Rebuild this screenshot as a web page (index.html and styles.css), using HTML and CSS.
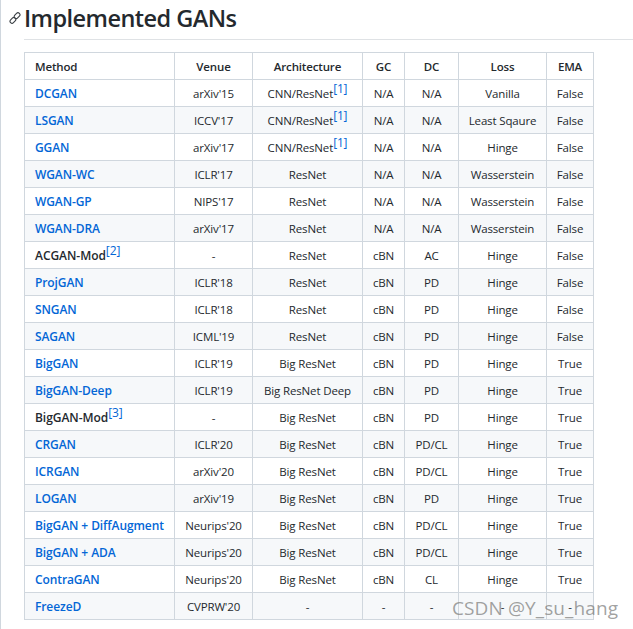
FILE: index.html
```html
<!DOCTYPE html>
<html lang="en">
<head>
<meta charset="utf-8">
<title>Implemented GANs</title>
<link rel="stylesheet" href="styles.css">
</head>
<body>
<main class="page">
  <h2 class="title">
    <a class="anchor" href="#" aria-label="Permalink">
      <svg viewBox="0 0 12 12" width="12" height="12" aria-hidden="true"><g fill="none" stroke="#3a3f44" stroke-width="1.1"><rect x="4.9" y="1.6" width="6.4" height="4" rx="2" transform="rotate(-45 8.1 3.6)"/><rect x="0.7" y="6.4" width="6.4" height="4" rx="2" transform="rotate(-45 3.9 8.4)"/></g></svg>
    </a>
    Implemented GANs
  </h2>
  <table class="gans">
    <colgroup>
      <col class="c-method"><col class="c-venue"><col class="c-arch"><col class="c-gc"><col class="c-dc"><col class="c-loss"><col class="c-ema">
    </colgroup>
    <thead>
      <tr><th class="left">Method</th><th>Venue</th><th>Architecture</th><th>GC</th><th>DC</th><th>Loss</th><th>EMA</th></tr>
    </thead>
    <tbody>
      <tr><td class="left"><a href="#">DCGAN</a></td><td>arXiv'15</td><td>CNN/ResNet<sup><a href="#">[1]</a></sup></td><td>N/A</td><td>N/A</td><td>Vanilla</td><td>False</td></tr>
      <tr><td class="left"><a href="#">LSGAN</a></td><td>ICCV'17</td><td>CNN/ResNet<sup><a href="#">[1]</a></sup></td><td>N/A</td><td>N/A</td><td>Least Sqaure</td><td>False</td></tr>
      <tr><td class="left"><a href="#">GGAN</a></td><td>arXiv'17</td><td>CNN/ResNet<sup><a href="#">[1]</a></sup></td><td>N/A</td><td>N/A</td><td>Hinge</td><td>False</td></tr>
      <tr><td class="left"><a href="#">WGAN-WC</a></td><td>ICLR'17</td><td>ResNet</td><td>N/A</td><td>N/A</td><td>Wasserstein</td><td>False</td></tr>
      <tr><td class="left"><a href="#">WGAN-GP</a></td><td>NIPS'17</td><td>ResNet</td><td>N/A</td><td>N/A</td><td>Wasserstein</td><td>False</td></tr>
      <tr><td class="left"><a href="#">WGAN-DRA</a></td><td>arXiv'17</td><td>ResNet</td><td>N/A</td><td>N/A</td><td>Wasserstein</td><td>False</td></tr>
      <tr><td class="left plain">ACGAN-Mod<sup><a href="#">[2]</a></sup></td><td>-</td><td>ResNet</td><td>cBN</td><td>AC</td><td>Hinge</td><td>False</td></tr>
      <tr><td class="left"><a href="#">ProjGAN</a></td><td>ICLR'18</td><td>ResNet</td><td>cBN</td><td>PD</td><td>Hinge</td><td>False</td></tr>
      <tr><td class="left"><a href="#">SNGAN</a></td><td>ICLR'18</td><td>ResNet</td><td>cBN</td><td>PD</td><td>Hinge</td><td>False</td></tr>
      <tr><td class="left"><a href="#">SAGAN</a></td><td>ICML'19</td><td>ResNet</td><td>cBN</td><td>PD</td><td>Hinge</td><td>False</td></tr>
      <tr><td class="left"><a href="#">BigGAN</a></td><td>ICLR'19</td><td>Big ResNet</td><td>cBN</td><td>PD</td><td>Hinge</td><td>True</td></tr>
      <tr><td class="left"><a href="#">BigGAN-Deep</a></td><td>ICLR'19</td><td>Big ResNet Deep</td><td>cBN</td><td>PD</td><td>Hinge</td><td>True</td></tr>
      <tr><td class="left plain">BigGAN-Mod<sup><a href="#">[3]</a></sup></td><td>-</td><td>Big ResNet</td><td>cBN</td><td>PD</td><td>Hinge</td><td>True</td></tr>
      <tr><td class="left"><a href="#">CRGAN</a></td><td>ICLR'20</td><td>Big ResNet</td><td>cBN</td><td>PD/CL</td><td>Hinge</td><td>True</td></tr>
      <tr><td class="left"><a href="#">ICRGAN</a></td><td>arXiv'20</td><td>Big ResNet</td><td>cBN</td><td>PD/CL</td><td>Hinge</td><td>True</td></tr>
      <tr><td class="left"><a href="#">LOGAN</a></td><td>arXiv'19</td><td>Big ResNet</td><td>cBN</td><td>PD</td><td>Hinge</td><td>True</td></tr>
      <tr><td class="left"><a href="#">BigGAN + DiffAugment</a></td><td>Neurips'20</td><td>Big ResNet</td><td>cBN</td><td>PD/CL</td><td>Hinge</td><td>True</td></tr>
      <tr><td class="left"><a href="#">BigGAN + ADA</a></td><td>Neurips'20</td><td>Big ResNet</td><td>cBN</td><td>PD/CL</td><td>Hinge</td><td>True</td></tr>
      <tr><td class="left"><a href="#">ContraGAN</a></td><td>Neurips'20</td><td>Big ResNet</td><td>cBN</td><td>CL</td><td>Hinge</td><td>True</td></tr>
      <tr><td class="left"><a href="#">FreezeD</a></td><td>CVPRW'20</td><td>-</td><td>-</td><td>-</td><td>-</td><td>-</td></tr>
    </tbody>
  </table>
  <div class="watermark">CSDN @Y_su_hang</div>
</main>
</body>
</html>
```
FILE: styles.css
```css
html, body {
  margin: 0;
  padding: 0;
  background: #fff;
}
body {
  height: 629px;
  overflow: hidden;
  font-family: "Open Sans", "Noto Sans", sans-serif;
  color: #24292e;
}
.page {
  position: relative;
  height: 629px;
  box-sizing: border-box;
  padding-left: 24px;
  overflow: hidden;
}
.page::before {
  content: "";
  position: absolute;
  left: 0;
  top: 0;
  bottom: 0;
  width: 1px;
  background: #d0d7de;
}
.title {
  position: relative;
  margin: 0 0 12px;
  height: 39px;
  border-bottom: 1px solid #dfe2e5;
  font-size: 23.5px;
  font-weight: 600;
  line-height: 37px;
  letter-spacing: -0.55px;
  white-space: nowrap;
}
.anchor {
  position: absolute;
  left: -15px;
  top: 12px;
  display: block;
  line-height: 0;
}
.gans {
  table-layout: fixed;
  width: 570px;
  border-collapse: collapse;
  font-size: 11.5px;
  letter-spacing: -0.15px;
}
.c-method { width: 150px; }
.c-venue { width: 78px; }
.c-arch { width: 110px; }
.c-gc { width: 42px; }
.c-dc { width: 54px; }
.c-loss { width: 88px; }
.c-ema { width: 47px; }
.gans tr {
  height: 27px;
}
.gans tbody tr:nth-child(even) {
  background: #f6f8fa;
}
.gans th, .gans td {
  border: 1px solid #d0d7de;
  padding: 2px 2px 0;
  text-align: center;
  line-height: 16px;
  white-space: nowrap;
}
.gans th {
  font-weight: 600;
}
.gans .left {
  text-align: left;
  padding-left: 10px;
}
.gans a {
  color: #0366d6;
  text-decoration: none;
}
.gans td.left > a {
  font-size: 12px;
  font-weight: 600;
  letter-spacing: -0.1px;
}
.gans td.plain {
  font-size: 12px;
  font-weight: 600;
  letter-spacing: -0.05px;
}
.gans sup {
  font-size: 12px;
  font-weight: 400;
  line-height: 0;
}
.watermark {
  position: absolute;
  left: 452px;
  top: 595px;
  font-size: 19px;
  line-height: 26px;
  letter-spacing: 0.1px;
  color: rgba(120, 120, 120, 0.7);
  white-space: nowrap;
}
```
